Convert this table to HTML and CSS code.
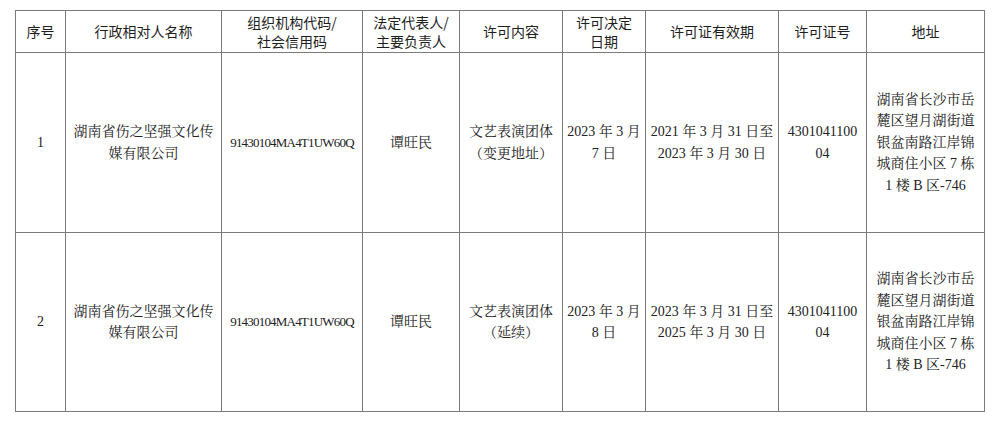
FILE: index.html
```html
<!DOCTYPE html>
<html lang="zh-CN">
<head>
<meta charset="utf-8">
<title>行政许可公示</title>
<link rel="stylesheet" href="styles.css">
</head>
<body>
<div class="page">
  <table class="permits">
    <colgroup>
      <col class="c-no"><col class="c-name"><col class="c-code"><col class="c-rep"><col class="c-content"><col class="c-date"><col class="c-valid"><col class="c-lic"><col class="c-addr">
    </colgroup>
    <thead>
      <tr>
        <th>序号</th>
        <th>行政相对人名称</th>
        <th>组织机构代码/<br>社会信用码</th>
        <th>法定代表人/<br>主要负责人</th>
        <th>许可内容</th>
        <th>许可决定<br>日期</th>
        <th>许可证有效期</th>
        <th>许可证号</th>
        <th>地址</th>
      </tr>
    </thead>
    <tbody>
      <tr class="r1">
        <td>1</td>
        <td>湖南省伤之坚强文化传媒有限公司</td>
        <td class="code">91430104MA4T1UW60Q</td>
        <td>谭旺民</td>
        <td>文艺表演团体（变更地址）</td>
        <td>2023 年 3 月 7 日</td>
        <td>2021 年 3 月 31 日至<br>2023 年 3 月 30 日</td>
        <td class="lic">430104110004</td>
        <td class="addr">湖南省长沙市岳麓区望月湖街道银盆南路江岸锦城商住小区 7 栋 1 楼 B 区-746</td>
      </tr>
      <tr class="r2">
        <td>2</td>
        <td>湖南省伤之坚强文化传媒有限公司</td>
        <td class="code">91430104MA4T1UW60Q</td>
        <td>谭旺民</td>
        <td>文艺表演团体（延续）</td>
        <td>2023 年 3 月 8 日</td>
        <td>2023 年 3 月 31 日至<br>2025 年 3 月 30 日</td>
        <td class="lic">430104110004</td>
        <td class="addr">湖南省长沙市岳麓区望月湖街道银盆南路江岸锦城商住小区 7 栋 1 楼 B 区-746</td>
      </tr>
    </tbody>
  </table>
</div>
</body>
</html>
```

FILE: styles.css
```css
html, body {
  margin: 0;
  padding: 0;
  background: #ffffff;
}

.page {
  padding: 10px 0 0 15px;
}

.permits {
  border-collapse: collapse;
  table-layout: fixed;
  width: 969px;
  color: #222222;
}

.c-no { width: 50px; }
.c-name { width: 156px; }
.c-code { width: 141px; }
.c-rep { width: 97px; }
.c-content { width: 103px; }
.c-date { width: 83px; }
.c-valid { width: 133px; }
.c-lic { width: 88px; }
.c-addr { width: 118px; }

.permits th,
.permits td {
  border: 1px solid #7a7a7a;
  text-align: center;
  vertical-align: middle;
  padding: 0 3px;
}

.permits th {
  height: 41px;
  font-family: "Noto Sans CJK SC", "Noto Sans", sans-serif;
  font-weight: 400;
  font-size: 14px;
  line-height: 19px;
  color: #1e1e1e;
}

.permits td {
  font-family: "Liberation Serif", "Noto Serif CJK SC", "Noto Sans CJK SC", serif;
  font-size: 14px;
  line-height: 21.5px;
}

.permits .r1 td { height: 179px; }
.permits .r2 td { height: 178px; }

.permits td.code {
  font-size: 13px;
  letter-spacing: -0.8px;
}

.permits td.lic {
  word-break: break-all;
  padding: 0 8px;
}

.permits td.addr {
  padding: 0 6px;
}
```
